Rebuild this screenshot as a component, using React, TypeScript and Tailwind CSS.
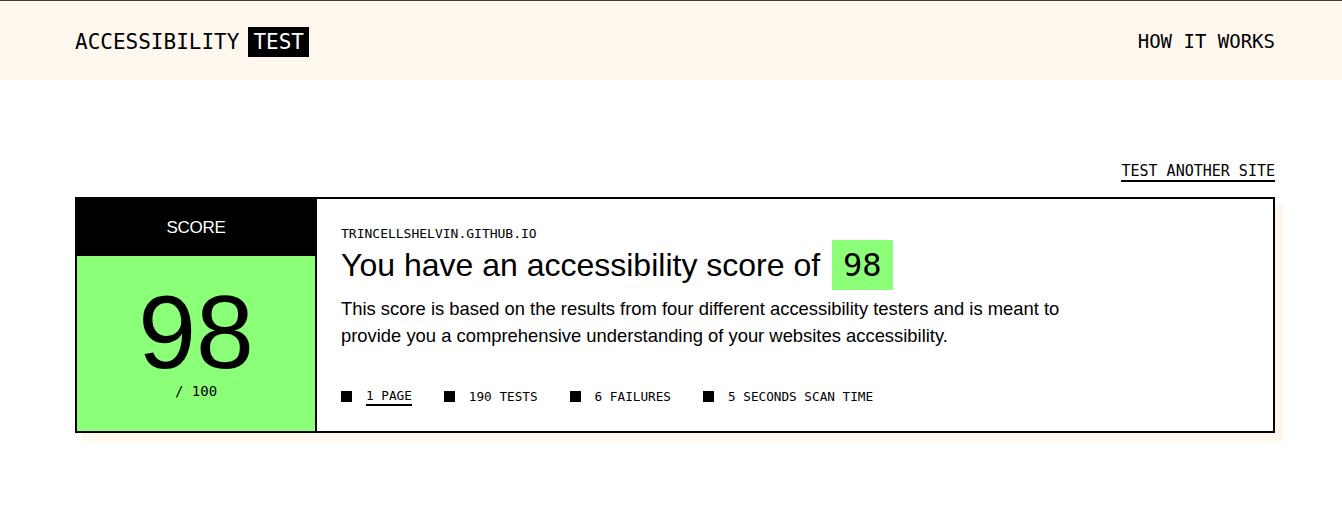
const mono = { fontFamily: '"DejaVu Sans Mono", "Liberation Mono", monospace' };

function Stat({ label, underline }: { label: string; underline?: boolean }) {
  return (
    <li className="flex items-center">
      <span className="mr-[14px] inline-block h-[11px] w-[11px] bg-black" />
      <span
        className={
          underline
            ? 'border-b-2 border-black text-[12.7px] leading-[17px] text-black'
            : 'text-[12.7px] leading-[17px] text-black'
        }
        style={mono}
      >
        {label}
      </span>
    </li>
  );
}

export default function App() {
  return (
    <div
      className="min-h-[515px] bg-white text-black"
      style={{ fontFamily: '"Liberation Sans", Arial, sans-serif' }}
    >
      <header className="border-t border-[#3f3a36] bg-[#fff8ef]">
        <div className="ml-[75px] flex h-[79px] w-[1200px] items-center justify-between pt-[2px]">
          <a className="flex items-center text-[21px] leading-[30px]" style={mono}>
            <span>ACCESSIBILITY</span>
            <span className="ml-[9px] bg-black px-[5px] text-white">TEST</span>
          </a>
          <nav className="text-[19px]" style={mono}>
            HOW IT WORKS
          </nav>
        </div>
      </header>

      <main className="ml-[75px] w-[1200px] pt-[82px]">
        <div className="flex justify-end">
          <a
            className="border-b-2 border-black text-[15px] leading-[18px]"
            style={mono}
          >
            TEST ANOTHER SITE
          </a>
        </div>

        <section className="mt-[15px] flex border-2 border-black bg-white shadow-[8px_8px_0_#fff7ec]">
          <div className="flex w-[240px] shrink-0 flex-col border-r-2 border-black">
            <div className="flex h-[57px] items-center justify-center bg-black text-[17px] tracking-[-0.3px] text-white">
              SCORE
            </div>
            <div className="flex h-[175px] flex-col items-center bg-[#8cff78] pt-[33px]">
              <span className="text-[104px] leading-[86px]">98</span>
              <span className="mt-[7px] text-[14px] leading-[18px]" style={mono}>
                / 100
              </span>
            </div>
          </div>

          <div className="flex-1 pl-[24px] pt-[28px]">
            <p className="text-[13px] leading-[13px]" style={mono}>
              TRINCELLSHELVIN.GITHUB.IO
            </p>
            <h1 className="flex h-[50px] items-center text-[32px]">
              <span>You have an accessibility score of</span>
              <span
                className="ml-[12px] inline-block h-[50px] bg-[#8cff78] px-[11px] leading-[50px]"
                style={mono}
              >
                98
              </span>
            </h1>
            <p className="mt-[5px] w-[780px] text-[18.4px] leading-[27px]">
              This score is based on the results from four different accessibility testers and is meant to
              provide you a comprehensive understanding of your websites accessibility.
            </p>
            <ul className="mt-[37px] flex h-[20px] items-center gap-[32px]">
              <Stat label="1 PAGE" underline />
              <Stat label="190 TESTS" />
              <Stat label="6 FAILURES" />
              <Stat label="5 SECONDS SCAN TIME" />
            </ul>
          </div>
        </section>
      </main>
    </div>
  );
}
